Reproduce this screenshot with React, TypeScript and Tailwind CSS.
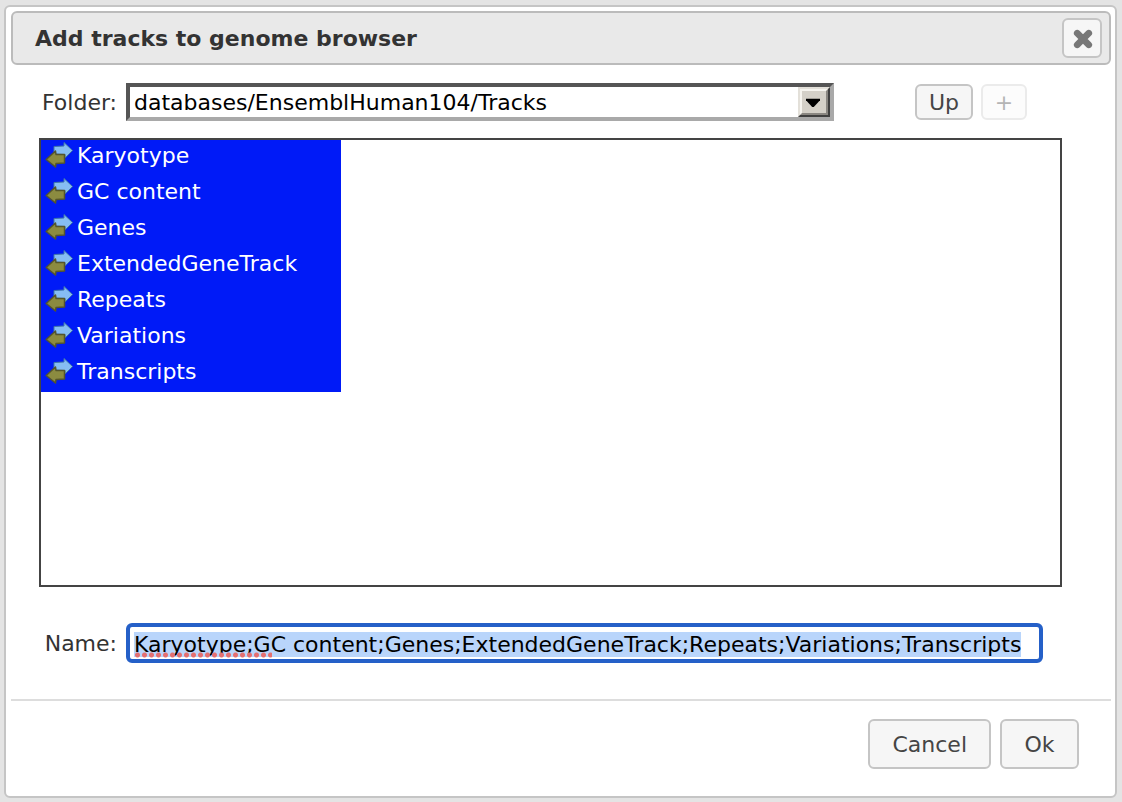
import { useEffect, useRef } from "react";

const tracks = ["Karyotype", "GC content", "Genes", "ExtendedGeneTrack", "Repeats", "Variations", "Transcripts"];

function TrackIcon() {
  return (
    <svg viewBox="0 0 28 28" className="h-7 w-7 shrink-0" aria-hidden="true">
      <path d="M9 6.500L19 6V2.500L27.500 10.500L20 18V14.500L9 14z" fill="#86bdf3" stroke="#3f76a8" strokeWidth="1" strokeLinejoin="round" />
      <path d="M19.500 14.500L11 14.500L10.500 11L1.200 19.500L10.500 27L11 23.500L19.500 23z" fill="#8b8b40" stroke="#54552c" strokeWidth="1.500" strokeLinejoin="round" />
    </svg>
  );
}

function FolderSelect() {
  return (
    <div className="grid h-[38px] w-[708px] grid-cols-[1fr_32px] border-4 border-t-[#555] border-r-[#a9a9a9] border-b-[#a9a9a9] border-l-[#555] bg-white">
      <select
        id="folder"
        className="col-span-2 col-start-1 row-start-1 h-[30px] w-full appearance-none bg-transparent pt-0.5 pl-1 text-black outline-none"
      >
        <option>databases/EnsemblHuman104/Tracks</option>
      </select>
      <span className="pointer-events-none col-start-2 row-start-1 flex h-[30px] border-2 border-t-[#e3e0d9] border-r-[#404040] border-b-[#404040] border-l-[#e3e0d9] bg-[#d4d0c8]">
        <span className="flex h-full w-full items-center justify-center border-2 border-t-[#f6f4ef] border-r-[#8a8782] border-b-[#8a8782] border-l-[#f6f4ef] pt-0.5 pr-0.5">
          <svg viewBox="0 0 16 10" className="h-[10px] w-4" aria-hidden="true">
            <path d="M1 .8h14v1.500L8.800 9H7.200L1 2.300z" fill="#000" />
          </svg>
        </span>
      </span>
    </div>
  );
}

export default function App() {
  const nameRef = useRef<HTMLInputElement>(null);

  useEffect(() => {
    const input = nameRef.current;
    if (!input) return;
    input.focus();
    input.select();
    input.scrollLeft = input.scrollWidth;
  }, []);

  return (
    <div className="min-h-screen bg-[#e4e4e4] pt-[5px] pr-[5px] pb-1 pl-1 font-['DejaVu_Sans',sans-serif] text-[22px] leading-7 text-[#333]">
      <div role="dialog" aria-labelledby="title" className="rounded-md border-2 border-[#c5c5c5] bg-white pt-1 pr-1 pb-[27px] pl-[5px]">
        <header className="flex h-[54px] items-center justify-between rounded-md border-2 border-[#bbb] bg-[#e9e9e9] pr-[7px] pl-[22px]">
          <h1 id="title" className="pt-0.5 font-bold">Add tracks to genome browser</h1>
          <button aria-label="Close" className="flex h-10 w-10 items-center justify-center rounded-md border-2 border-[#c5c5c5] bg-[#f6f6f6] pt-0.5 pl-0.5">
            <svg viewBox="0 0 20 20" className="h-5 w-5" aria-hidden="true">
              <path d="M4.200 4.200l11.600 11.600M15.800 4.200L4.200 15.800" stroke="#777" strokeWidth="6.600" strokeLinecap="round" />
            </svg>
          </button>
        </header>

        <div className="px-7 pt-[18px]">
          <div className="flex items-center">
            <label htmlFor="folder" className="w-[87px] pt-0.5 pr-[9px] text-right">Folder:</label>
            <FolderSelect />
            <button className="ml-[81px] h-9 w-[58px] rounded-md border-2 border-[#c5c5c5] bg-[#f6f6f6] pt-0.5 text-[#454545]">Up</button>
            <button disabled aria-label="Create" className="ml-2 h-9 w-[46px] rounded-md border-2 border-[#ebebeb] bg-[#fcfcfc] pt-0.5 text-[#b5b5b5]">+</button>
          </div>

          <ul className="mt-[17px] mr-[21px] h-[449px] border-2 border-[#444] bg-white text-white">
            {tracks.map((track) => (
              <li key={track} className="flex h-9 w-[300px] items-start gap-1 bg-[#001af7] pl-1">
                <TrackIcon />
                <span className="pt-0.5">{track}</span>
              </li>
            ))}
          </ul>

          <div className="mt-9 flex items-center">
            <label htmlFor="name" className="w-[87px] pt-0.5 pr-[9px] text-right">Name:</label>
            <div className="relative mr-10 flex-1">
              <input
                id="name"
                ref={nameRef}
                spellCheck={false}
                defaultValue={tracks.join(";")}
                className="block h-10 w-full rounded-md border-4 border-[#2560c8] bg-white px-1 pt-0.5 text-black outline-none selection:bg-[#b9d5fb] selection:text-black"
              />
              <span className="pointer-events-none absolute top-[29px] left-2 h-[6px] w-[138px] bg-[radial-gradient(circle,#e46f70_2px,transparent_3px)] bg-[length:7px_6px]" />
            </div>
          </div>
        </div>

        <footer className="mt-9 flex justify-end gap-[9px] border-t-2 border-[#ddd] pt-[18px] pr-8">
          <button className="h-[50px] rounded-md border-2 border-[#c5c5c5] bg-[#f6f6f6] px-[22px] pt-0.5 text-[#454545]">Cancel</button>
          <button className="h-[50px] min-w-[79px] rounded-md border-2 border-[#c5c5c5] bg-[#f6f6f6] px-[22px] pt-0.5 text-[#454545]">Ok</button>
        </footer>
      </div>
    </div>
  );
}
